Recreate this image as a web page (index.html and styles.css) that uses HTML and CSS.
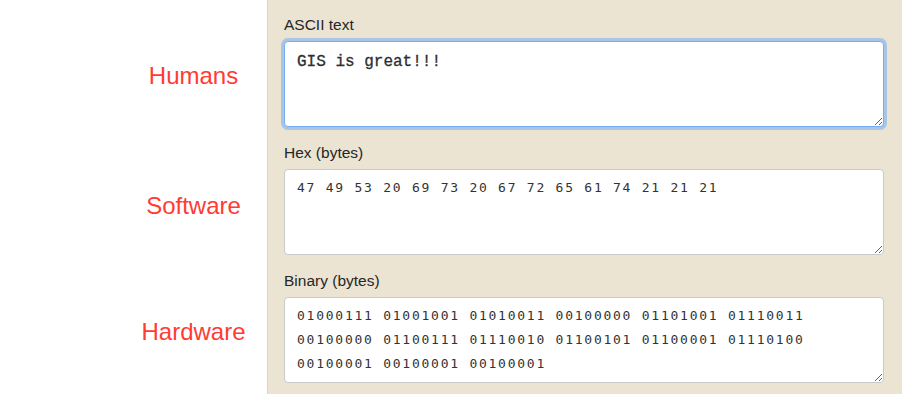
FILE: index.html
```html
<!DOCTYPE html>
<html lang="en">
<head>
    <meta charset="UTF-8">
    <meta name="viewport" content="width=device-width, initial-scale=1.0">
    <title>Text to bytes</title>
    <link rel="stylesheet" href="styles.css">
</head>
<body>

<div class="page">
    <div class="side">
        <div class="side_label">Humans</div>
        <div class="side_label">Software</div>
        <div class="side_label">Hardware</div>
    </div>

    <div class="panel">
        <div class="field">
            <label class="field_label" for="ascii">ASCII text</label>
            <textarea id="ascii" class="box ascii focused" spellcheck="false">GIS is great!!!</textarea>
        </div>
        <div class="field">
            <label class="field_label" for="hex">Hex (bytes)</label>
            <textarea id="hex" class="box" spellcheck="false">47 49 53 20 69 73 20 67 72 65 61 74 21 21 21</textarea>
        </div>
        <div class="field">
            <label class="field_label" for="bin">Binary (bytes)</label>
            <textarea id="bin" class="box" spellcheck="false">01000111 01001001 01010011 00100000 01101001 01110011 00100000 01100111 01110010 01100101 01100001 01110100 00100001 00100001 00100001</textarea>
        </div>
    </div>
</div>

</body>
</html>
```

FILE: styles.css
```css
* {
    box-sizing: border-box;
}
body {
    margin: 0;
    background-color: #fff;
    font-family: "Liberation Sans", Arial, sans-serif;
}
.page {
    display: flex;
    min-height: 100vh;
}
.side {
    width: 268px;
    flex-shrink: 0;
    padding-top: 12px;
    padding-left: 120px;
    border-right: 1px solid #d9d5cd;
}
.side_label {
    height: 128px;
    display: flex;
    align-items: center;
    justify-content: center;
    color: #ff3b33;
    font-size: 24px;
}
.side_label:nth-child(2) {
    padding-top: 4px;
}
.panel {
    flex: 1;
    background-color: #ebe4d3;
    padding: 16px 16px 0 16px;
}
.field {
    margin-bottom: 17px;
}
.field_label {
    display: block;
    color: #262626;
    font-size: 15.5px;
    line-height: 18px;
    margin-bottom: 7px;
}
.box {
    display: block;
    width: 600px;
    height: 86px;
    margin: 0;
    padding: 6px 12px;
    background-color: #fff;
    border: 1px solid #c9c9c9;
    border-radius: 4px;
    color: #333;
    font-family: "DejaVu Sans Mono", monospace;
    font-size: 13px;
    letter-spacing: 1.75px;
    line-height: 24px;
    outline: none;
    resize: vertical;
}
.ascii {
    padding-top: 8px;
    font-family: "Liberation Mono", "Courier New", monospace;
    font-size: 16px;
    letter-spacing: 0;
    color: #2e2e2e;
    -webkit-text-stroke: 0.3px #2e2e2e;
}
.focused {
    border-color: #76adf3;
    box-shadow: 0 0 0 3px #a9c5e5;
}
```
